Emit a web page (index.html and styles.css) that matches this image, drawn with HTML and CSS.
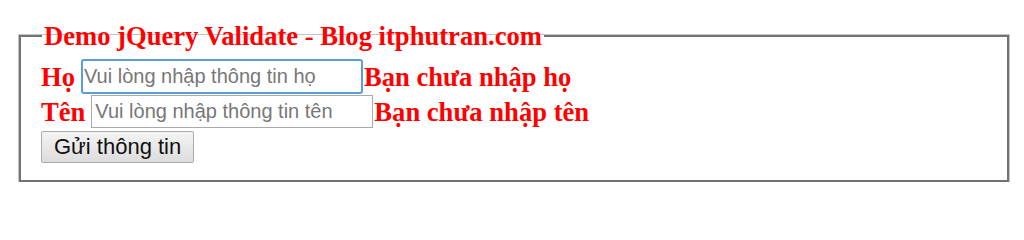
FILE: index.html
```html
<!DOCTYPE html>
<html lang="vi">
<head>
<meta charset="utf-8">
<title>Demo jQuery Validate</title>
<link rel="stylesheet" href="styles.css">
</head>
<body>
<form class="form">
  <fieldset class="box">
    <legend class="box-title">Demo jQuery Validate - Blog itphutran.com</legend>
    <div class="row row-first">
      <label class="lbl" for="ho">Họ</label>
      <input class="field field-focus" id="ho" type="text" placeholder="Vui lòng nhập thông tin họ">
      <span class="err">Bạn chưa nhập họ</span>
    </div>
    <div class="row row-second">
      <label class="lbl" for="ten">Tên</label>
      <input class="field" id="ten" type="text" placeholder="Vui lòng nhập thông tin tên">
      <span class="err">Bạn chưa nhập tên</span>
    </div>
    <div class="row-btn">
      <button class="btn" type="button">Gửi thông tin</button>
    </div>
  </fieldset>
</form>
</body>
</html>
```

FILE: styles.css
```css
html, body {
  margin: 0;
  padding: 0;
  background: #fff;
}

.form {
  padding: 21px 15px 0 19px;
}

.box {
  margin: 0;
  padding: 8px 19px 17px 20px;
  border: 2px solid #727272;
  box-shadow: 0 0 0 1px #c4c4c4;
  min-width: 0;
}

.box-title {
  font-family: "Liberation Serif", "Times New Roman", serif;
  font-weight: bold;
  font-size: 26.6px;
  color: #ff0000;
  padding: 0 2px;
  margin-left: 1px;
  line-height: 30px;
}

.row {
  display: flex;
  align-items: center;
}

.row-first {
  height: 35px;
}

.row-second {
  height: 33px;
  margin-top: 1px;
}

.lbl, .err {
  font-family: "Liberation Serif", "Times New Roman", serif;
  font-weight: bold;
  font-size: 26.6px;
  color: #ff0000;
  line-height: 30px;
}

.lbl {
  margin-right: 6px;
}

.err {
  margin-left: 1px;
}

.field {
  box-sizing: border-box;
  width: 282px;
  height: 33px;
  margin: 0;
  padding: 2px 3px;
  border: 1px solid #a9a9a9;
  font-family: "Liberation Sans", Arial, sans-serif;
  font-size: 20px;
  color: #000;
  outline: none;
}

.field::placeholder {
  color: #777;
}

.field-focus {
  height: 35px;
  border: 2px solid #5b9dd9;
  border-radius: 3px;
  padding: 1px 1px;
}

.row-btn {
  display: flex;
  margin-top: 3px;
}

.btn {
  box-sizing: border-box;
  height: 32px;
  padding: 0 12px;
  font-family: "Liberation Sans", Arial, sans-serif;
  font-size: 22px;
  color: #111;
  background: linear-gradient(#f4f4f4, #dcdcdc);
  border: 1px solid #acacac;
  border-radius: 2px;
}
```
